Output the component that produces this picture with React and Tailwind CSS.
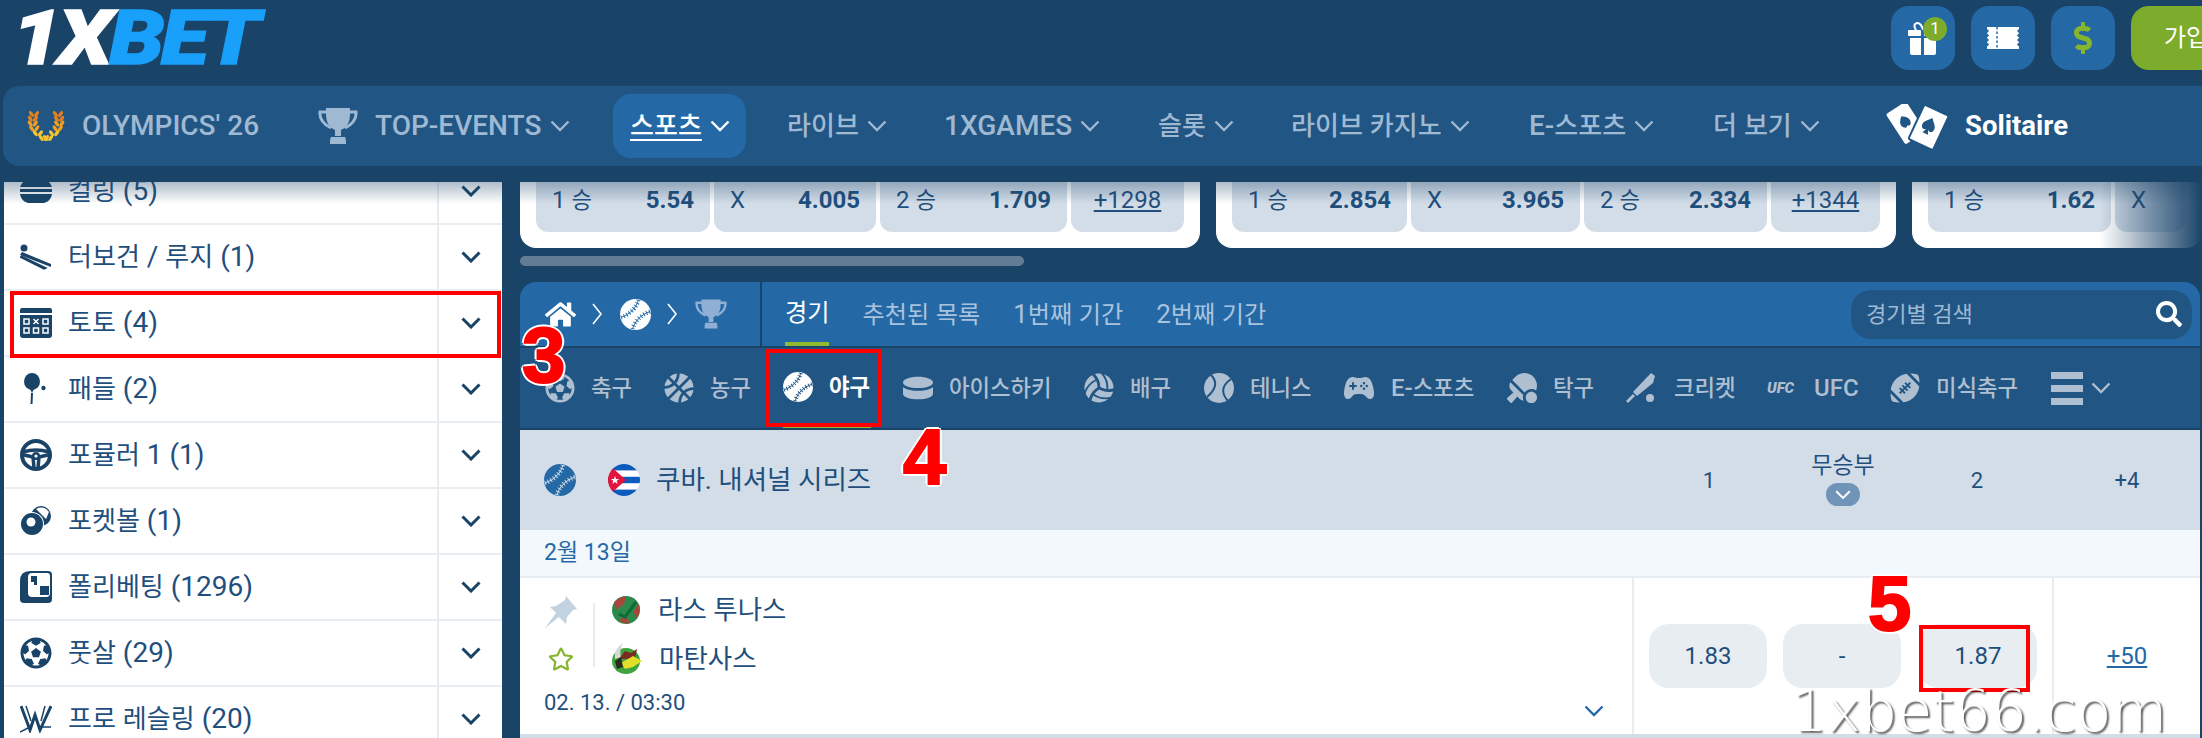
import React from "react";
import { FaFutbol, FaBasketballBall, FaVolleyballBall, FaTableTennis, FaFootballBall, FaHome, FaDollarSign, FaSearch, FaRegStar, FaHockeyPuck } from "react-icons/fa";
import { IoGameController } from "react-icons/io5";

const T = ({ children }) =>
  String(children)
    .split(/([가-힣]+)/)
    .map((p, i) => (/[가-힣]/.test(p) ? <span key={i} className="text-[0.93em]">{p}</span> : p));

const Chev = ({ className = "", w = 20, sw = 2.4 }) => (
  <svg width={w} height={w * 0.6} viewBox="0 0 20 12" fill="none" stroke="currentColor" strokeWidth={sw} className={className}>
    <path d="M1.5 1.5 L10 10 L18.5 1.5" />
  </svg>
);

const S1 = "M19 1 C17 9 10 16 1 19";
const S2 = "M31 13 C22 16 15 23 13 31";
const Ball = ({ bg, seam, s = 30 }) => (
  <svg width={s} height={s} viewBox="0 0 32 32" className="shrink-0">
    <circle cx="16" cy="16" r="16" fill={bg} />
    <path d={S1} fill="none" stroke={seam} strokeWidth="1" />
    <path d={S1} fill="none" stroke={seam} strokeWidth="4.5" strokeDasharray="1 2.2" />
    <path d={S2} fill="none" stroke={seam} strokeWidth="1" />
    <path d={S2} fill="none" stroke={seam} strokeWidth="4.5" strokeDasharray="1 2.2" />
  </svg>
);

const Laurel = () => {
  const leaves = [];
  for (let i = 0; i < 6; i++) {
    const t = i / 5;
    const y = 3 + t * 24;
    const x = 7 + 10 * t * t * t - 2 * Math.sin(t * 3.1);
    const col = i < 2 ? "#e5801f" : i < 4 ? "#ef9f22" : "#f6c42e";
    [[x - 2.6, -35], [x + 2.6, 35]].forEach(([lx, r], k) => {
      leaves.push(<ellipse key={`a${i}${k}`} cx={lx} cy={y} rx="1.7" ry="3.4" fill={col} transform={`rotate(${r} ${lx} ${y})`} />);
      leaves.push(<ellipse key={`b${i}${k}`} cx={38 - lx} cy={y} rx="1.7" ry="3.4" fill={col} transform={`rotate(${-r} ${38 - lx} ${y})`} />);
    });
  }
  return <svg width="38" height="30" viewBox="0 0 38 30" className="shrink-0">{leaves}</svg>;
};

const Trophy = ({ color, w = 40, h = 36 }) => (
  <svg width={w} height={h} viewBox="0 0 40 36" className="shrink-0">
    <path d="M9 4 H2 Q1 14 13 20" fill="none" stroke={color} strokeWidth="3" />
    <path d="M31 4 H38 Q39 14 27 20" fill="none" stroke={color} strokeWidth="3" />
    <path d="M8 0 H32 V7 Q32 18 23 22 V28 H17 V22 Q8 18 8 7 Z" fill={color} />
    <path d="M13 29 H27 Q28 30 28 36 H12 Q12 30 13 29 Z" fill={color} />
  </svg>
);

const Gift = () => (
  <svg width="30" height="34" viewBox="0 0 30 34" fill="#fff">
    <path d="M8 8 C4 2 9 -1 13 3 L15 7 L24 7" fill="none" stroke="#fff" strokeWidth="2" />
    <rect x="0" y="8" width="13" height="6" rx="1" />
    <rect x="16" y="8" width="14" height="6" rx="1" />
    <path d="M2 16 H13 V33 H4 Q2 33 2 31 Z" />
    <path d="M16 16 H28 V31 Q28 33 26 33 H16 Z" />
  </svg>
);

const Ticket = () => (
  <svg width="32" height="22" viewBox="0 0 32 22">
    <rect width="32" height="22" fill="#fff" />
    {[3, 7.5, 12, 16.5].map((y) => (
      <g key={y} fill="#2469a6">
        <circle cx="0" cy={y + 1} r="1.7" />
        <circle cx="32" cy={y + 1} r="1.7" />
      </g>
    ))}
    <path d="M10 0 V22" stroke="#2469a6" strokeWidth="1.5" strokeDasharray="2.5 2" />
  </svg>
);

const Solitaire = () => (
  <svg width="63" height="45" viewBox="0 0 63 45" className="shrink-0">
    <g transform="rotate(-33 18 20)">
      <rect x="8" y="2" width="24" height="36" rx="2" fill="#fff" />
      <path d="M20 12 C24 15 27 19 24 23 C22 25 21 24 20 23 C19 24 18 25 16 23 C13 19 16 15 20 12 Z" fill="#215583" />
    </g>
    <g transform="rotate(25 44 24)">
      <rect x="29" y="5" width="27" height="38" rx="2" fill="#fff" stroke="#215583" strokeWidth="2" />
      <path d="M42 14 C46 19 50 21 48 26 C47 28 44 28 43 26 L45 31 H39 L41 26 C40 28 37 28 36 26 C34 21 38 19 42 14 Z" fill="#215583" />
    </g>
  </svg>
);

const D = "#1a4368";
const Curling = () => (
  <svg width="32" height="40" viewBox="0 0 32 40" fill={D}>
    <rect x="9" y="0" width="14" height="8" rx="2" />
    <path d="M6 9 H26 Q31 12 32 16 H0 Q1 12 6 9 Z" />
    <rect x="0" y="18" width="32" height="3" />
    <path d="M0 23 H32 Q31 30 24 32 H8 Q1 30 0 23 Z" />
  </svg>
);
const Luge = () => (
  <svg width="32" height="26" viewBox="0 0 32 26" fill={D}>
    <circle cx="4" cy="4" r="3.5" />
    <path d="M0 11 L2 8 L31 20 V23 Z" />
    <path d="M0 13 L24 25 L26 24 L1 12" stroke={D} strokeWidth="1.5" />
  </svg>
);
const Toto = () => (
  <svg width="32" height="30" viewBox="0 0 32 30">
    <path d="M2 0 H30 Q32 0 32 2 V5 H0 V2 Q0 0 2 0 Z" fill={D} />
    <path d="M0 7 H32 V27 Q32 30 29 30 H3 Q0 30 0 27 Z" fill={D} />
    <g fill="none" stroke="#fff" strokeWidth="1.5">
      <rect x="4" y="11" width="5" height="5" />
      <path d="M13.5 11 L18.5 16 M18.5 11 L13.5 16" />
      <rect x="23" y="11" width="5" height="5" />
      <rect x="4" y="20" width="5" height="5" />
      <rect x="13.5" y="20" width="5" height="5" />
      <rect x="23" y="20" width="5" height="5" />
    </g>
  </svg>
);
const Paddle = () => (
  <svg width="24" height="32" viewBox="0 0 24 32" fill={D}>
    <ellipse cx="8" cy="8.5" rx="8" ry="8.5" />
    <path d="M6 16 L8 20 L10 16 M7 20 H9 L8.5 31 H6.5 Z" />
    <circle cx="19.5" cy="15" r="2.2" />
  </svg>
);
const Wheel = () => (
  <svg width="32" height="32" viewBox="0 0 32 32" fill="none" stroke={D}>
    <circle cx="16" cy="16" r="14" strokeWidth="4" />
    <path d="M3 13 Q16 9 29 13 M4 16 L13 18 L14 29 M28 16 L19 18 L18 29" strokeWidth="3.5" />
    <circle cx="16" cy="17" r="4" fill={D} stroke="none" />
    <circle cx="16" cy="17" r="1.6" fill="#fff" stroke="none" />
  </svg>
);
const Pool = () => (
  <svg width="32" height="32" viewBox="0 0 32 32">
    <circle cx="21" cy="11" r="10" fill={D} />
    <path d="M16 4 Q24 0 29 7 L26 14 Q20 8 16 4 Z" fill="#fff" />
    <circle cx="12" cy="19" r="12" fill="#fff" />
    <circle cx="12" cy="19" r="11" fill={D} />
    <circle cx="11" cy="17" r="4.5" fill="#fff" />
  </svg>
);
const Poly = () => (
  <svg width="32" height="32" viewBox="0 0 32 32">
    <path d="M10 0 H28 Q32 0 32 4 V28 Q32 32 28 32 H4 Q0 32 0 28 V10 Q0 0 10 0 Z" fill={D} />
    <path d="M12 2 H27 Q30 2 30 5 V22 Q30 26 26 26 H12 Q8 26 8 22 V6 Q8 2 12 2 Z" fill="#fff" />
    <path d="M11 5 H17 V14 H14 V11 H11 Z M20 15 H29 V24 H20 Z" fill={D} />
  </svg>
);
const Wwe = () => (
  <svg width="32" height="28" viewBox="0 0 32 28" fill="none" stroke={D}>
    <path d="M1 1 L10 25 L15 10 L20 25 L31 1" strokeWidth="3" />
    <path d="M6 1 L11 16 M25 1 L21 16" strokeWidth="1.5" />
    <path d="M0 27 L10 22 M20 22 H31" strokeWidth="1.5" />
  </svg>
);
const Tennis = () => (
  <svg width="30" height="30" viewBox="0 0 30 30">
    <circle cx="15" cy="15" r="15" fill="#aebfd1" />
    <path d="M7 2 Q17 12 3 24 M27 6 Q13 16 24 28" fill="none" stroke="#215583" strokeWidth="2" />
  </svg>
);
const Cricket = () => (
  <svg width="32" height="30" viewBox="0 0 32 30" fill="#aebfd1">
    <path d="M25 0 L29 3 L27 10 L11 23 L7 19 Z" />
    <path d="M7 21 L9 23 L2 30 L0 28 Z" />
    <circle cx="24" cy="25" r="4" />
  </svg>
);
const Pin = () => (
  <svg width="34" height="32" viewBox="0 0 34 32" fill="#c3d2e0">
    <path d="M22 0 L33 13 L29 14 L23 21 L22 28 L15 21 L1 32 L12 17 L6 11 L12 10 L21 4 Z" />
  </svg>
);
const Cuba = () => (
  <svg width="32" height="32" viewBox="0 0 32 32" className="shrink-0">
    <defs><clipPath id="cu"><circle cx="16" cy="16" r="16" /></clipPath></defs>
    <g clipPath="url(#cu)">
      <rect width="32" height="32" fill="#fff" />
      <rect y="0" width="32" height="6.4" fill="#0a5bbd" />
      <rect y="12.8" width="32" height="6.4" fill="#0a5bbd" />
      <rect y="25.6" width="32" height="6.4" fill="#0a5bbd" />
      <path d="M0 0 L18 16 L0 32 Z" fill="#e3143c" />
      <path d="M7 12 L8 15 H11 L8.7 17 L9.6 20 L7 18 L4.4 20 L5.3 17 L3 15 H6 Z" fill="#fff" />
    </g>
  </svg>
);
const Team1 = () => (
  <svg width="30" height="28" viewBox="0 0 30 28" className="shrink-0 blur-[0.5px]">
    <ellipse cx="15" cy="14" rx="14" ry="14" fill="#2c8a4c" />
    <path d="M3 6 Q9 1 15 0 L13 8 L5 14 Z M22 16 L28 8 Q30 16 26 22 Z M8 24 L14 20 L19 27 Q13 29 8 24 Z" fill="#a8463c" />
    <path d="M8 18 L14 21 L25 6" fill="none" stroke="#0f6b36" strokeWidth="3" />
  </svg>
);
const Team2 = () => (
  <svg width="32" height="31" viewBox="0 0 32 31" className="shrink-0 blur-[0.5px]">
    <ellipse cx="15" cy="18" rx="14" ry="13" fill="#3fa33f" />
    <path d="M4 16 Q2 6 12 0 Q8 8 10 14 Z" fill="#d8d8d8" />
    <path d="M8 16 L14 8 L20 10 L26 6 L24 16 Z" fill="#7a2c22" />
    <path d="M10 20 L22 13 L31 18 L22 24 L14 26 Z" fill="#e2df2a" />
    <path d="M4 18 L10 14 L12 24 L6 26 Z" fill="#2a2a1e" />
  </svg>
);

const navItems = [
  { t: "라이브", w: "ml-[41px] w-[157px]" },
  { t: "1XGAMES", w: "w-[214px]" },
  { t: "슬롯", w: "w-[133px]" },
  { t: "라이브 카지노", w: "w-[238px]" },
  { t: "E-스포츠", w: "w-[184px]" },
  { t: "더 보기", w: "w-[173px]" },
];

const sports = [
  { i: <FaFutbol size={30} />, t: "축구", w: "w-[119px]" },
  { i: <FaBasketballBall size={30} />, t: "농구", w: "w-[119px]" },
  { i: <Ball bg="#fff" seam="#215583" />, t: "야구", w: "w-[120px]", a: true },
  { i: <FaHockeyPuck size={30} />, t: "아이스하키", w: "w-[181px]" },
  { i: <FaVolleyballBall size={30} />, t: "배구", w: "w-[120px]" },
  { i: <Tennis />, t: "테니스", w: "w-[139px]" },
  { i: <IoGameController size={32} />, t: "E-스포츠", w: "w-[164px]" },
  { i: <FaTableTennis size={30} />, t: "탁구", w: "w-[119px]" },
  { i: <Cricket />, t: "크리켓", w: "w-[141px]" },
  { i: <span className="block w-[31px] text-[15px] font-black italic leading-none">UFC</span>, t: "UFC", w: "w-[123px]" },
  { i: <FaFootballBall size={30} />, t: "미식축구", w: "w-[161px]" },
];

const side = [
  { i: <Curling />, t: "컬링 (5)" },
  { i: <Luge />, t: "터보건 / 루지 (1)" },
  { i: <Toto />, t: "토토 (4)" },
  { i: <Paddle />, t: "패들 (2)" },
  { i: <Wheel />, t: "포뮬러 1 (1)" },
  { i: <Pool />, t: "포켓볼 (1)" },
  { i: <Poly />, t: "폴리베팅 (1296)" },
  { i: <FaFutbol size={32} color={D} />, t: "풋살 (29)" },
  { i: <Wwe />, t: "프로 레슬링 (20)" },
];

const Cell = ({ a, b, w }) => (
  <div className={`${w} h-[64px] shrink-0 rounded-b-[12px] bg-[#d3dde8] flex items-center justify-between px-4 text-[24px] text-[#1f4f7d]`}>
    <span><T>{a}</T></span>
    <span className="font-bold">{b}</span>
  </div>
);
const More = ({ t, w }) => (
  <div className={`${w} h-[64px] shrink-0 rounded-b-[12px] bg-[#d3dde8] flex items-center justify-center text-[24px] text-[#1f4f7d] underline underline-offset-2`}>{t}</div>
);
const Card = ({ children, w = "w-[680px]" }) => (
  <div className={`${w} h-[80px] shrink-0 rounded-b-[16px] bg-white flex gap-1 px-4`}>{children}</div>
);
const Odd = ({ t, w = "w-[118px]" }) => (
  <div className={`${w} h-[64px] rounded-[20px] bg-[#e8edf2] flex items-center justify-center text-[24px] text-[#1f4f7d]`}>{t}</div>
);

const Digit = ({ t, className }) => (
  <span className={`absolute font-['Liberation_Sans',sans-serif] font-bold text-[78px] leading-none text-[#ff0000] [-webkit-text-stroke:2px_#ff0000] [text-shadow:3px_0_0_#fff,-3px_0_0_#fff,0_3px_0_#fff,0_-3px_0_#fff,2px_2px_0_#fff,-2px_2px_0_#fff,2px_-2px_0_#fff,-2px_-2px_0_#fff] ${className}`}>{t}</span>
);

export default function App() {
  return (
    <div className="relative w-[2202px] h-[738px] overflow-hidden bg-[#1a4368] font-['Roboto','Noto_Sans_CJK_KR',sans-serif]">
      {/* header */}
      <div className="h-[86px] flex items-start pt-[6px] pl-[12px]">
        <div className="h-[64px] flex items-center italic font-black text-[76px] leading-none tracking-[-3px] origin-left scale-x-[1.16] [-webkit-text-stroke:1.5px_currentColor] font-['Roboto',sans-serif]">
          <span className="text-white">1X</span>
          <span className="text-[#18a0fb]">BET</span>
        </div>
        <div className="ml-auto flex gap-4">
          <div className="relative w-[64px] h-[64px] rounded-[18px] bg-[#2469a6] flex items-center justify-center pt-[2px]">
            <Gift />
            <span className="absolute left-[32px] top-[11px] w-[24px] h-[24px] rounded-full bg-[#7dab2c] text-white text-[17px] flex items-center justify-center">1</span>
          </div>
          <div className="w-[64px] h-[64px] rounded-[18px] bg-[#2469a6] flex items-center justify-center"><Ticket /></div>
          <div className="w-[64px] h-[64px] rounded-[18px] bg-[#2469a6] flex items-center justify-center text-[#85b52e]"><FaDollarSign size={32} /></div>
          <div className="w-[71px] h-[64px] rounded-l-[18px] bg-[#7dab2c] pl-[33px] flex items-center text-white text-[24px] whitespace-nowrap">가입</div>
        </div>
      </div>

      {/* nav */}
      <div className="ml-[3px] h-[80px] rounded-l-[16px] bg-[#215583] flex items-center pl-[24px] text-[28px] font-medium text-[#a0b9d3] whitespace-nowrap">
        <div className="w-[291px] flex items-center gap-[17px]"><Laurel /><span>OLYMPICS' 26</span></div>
        <div className="w-[295px] flex items-center gap-[17px]">
          <Trophy color="#a0b9d3" />
          <span>TOP-EVENTS</span><Chev className="ml-[-8px]" />
        </div>
        <div className="w-[133px] h-[64px] rounded-[18px] bg-[#2469a6] flex items-center pl-[17px] text-white gap-2">
          <span className="underline underline-offset-4"><T>스포츠</T></span><Chev />
        </div>
        {navItems.map((n) => (
          <div key={n.t} className={`${n.w} flex items-center gap-2`}><span><T>{n.t}</T></span><Chev /></div>
        ))}
        <div className="flex items-center gap-4 text-white font-bold text-[27.5px]"><Solitaire /><span>Solitaire</span></div>
      </div>

      {/* main */}
      <div className="relative mt-[16px] h-[556px] overflow-hidden flex">
        <aside className="ml-[4px] w-[498px] shrink-0 bg-white text-[28px] text-[#1f4f7d]">
          <div className="mt-[-23px]">
            {side.map((s) => (
              <div key={s.t} className="h-[66px] flex border-b-2 border-[#e8edf2]">
                <div className="flex-1 flex items-center pl-4">
                  <span className="w-[32px] mr-4 flex justify-center shrink-0">{s.i}</span>
                  <span><T>{s.t}</T></span>
                </div>
                <div className="w-[65px] border-l-2 border-[#e8edf2] flex items-center justify-center text-[#1a4368]"><Chev sw={3} /></div>
              </div>
            ))}
          </div>
        </aside>

        <div className="ml-[18px] w-[1682px] shrink-0">
          <div className="relative h-[66px] overflow-hidden">
            <div className="flex gap-4 mt-[-14px]">
              <Card>
                <Cell a="1 승" b="5.54" w="w-[174px]" />
                <Cell a="X" b="4.005" w="w-[162px]" />
                <Cell a="2 승" b="1.709" w="w-[187px]" />
                <More t="+1298" w="w-[113px]" />
              </Card>
              <Card>
                <Cell a="1 승" b="2.854" w="w-[175px]" />
                <Cell a="X" b="3.965" w="w-[169px]" />
                <Cell a="2 승" b="2.334" w="w-[183px]" />
                <More t="+1344" w="w-[109px]" />
              </Card>
              <Card w="w-[290px]">
                <Cell a="1 승" b="1.62" w="w-[183px]" />
                <Cell a="X" b="" w="w-[70px]" />
              </Card>
            </div>
            <div className="absolute right-0 top-0 bottom-0 w-[102px] bg-gradient-to-r from-transparent to-[#1a4368]" />
          </div>
          <div className="mt-[8px] w-[504px] h-[10px] rounded-[5px] bg-[#637c96]" />

          <div className="mt-[16px] w-[1680px]">
            <div className="h-[64px] rounded-t-[16px] bg-[#2469a6] flex items-stretch">
              <div className="w-[242px] border-r-2 border-[#1a4368] flex items-center pl-[25px] text-white">
                <FaHome size={31} className="shrink-0" />
                <svg width="12" height="24" viewBox="0 0 12 24" fill="none" stroke="#fff" strokeWidth="1.6" className="ml-[15px] mr-[17px] shrink-0"><path d="M2 2 L10 12 L2 22" /></svg>
                <Ball bg="#fff" seam="#2469a6" s={31} />
                <svg width="12" height="24" viewBox="0 0 12 24" fill="none" stroke="#fff" strokeWidth="1.6" className="ml-[15px] mr-[17px] shrink-0"><path d="M2 2 L10 12 L2 22" /></svg>
                <Trophy color="#8fb0d4" w={32} h={30} />
              </div>
              <div className="flex-1 flex items-stretch pl-[23px] text-[26px] text-[#a9c3de] gap-[33px]">
                <div className="flex items-center text-white border-b-4 border-[#8fbb2f]"><span><T>경기</T></span></div>
                <div className="flex items-center"><span><T>추천된 목록</T></span></div>
                <div className="flex items-center"><span><T>1번째 기간</T></span></div>
                <div className="flex items-center"><span><T>2번째 기간</T></span></div>
              </div>
              <div className="w-[349px] flex items-center pr-2">
                <div className="w-[341px] h-[49px] rounded-[20px] bg-[#215583] flex items-center justify-between pl-[15px] pr-[10px] text-[22px] text-[#9fb9d3]">
                  <span>경기별 검색</span>
                  <FaSearch size={26} color="#fff" />
                </div>
              </div>
            </div>
            <div className="h-[2px] bg-[#1a4368]" />
            <div className="h-[80px] bg-[#215583] flex items-stretch pl-[25px] text-[24px] font-medium text-[#aebfd1] whitespace-nowrap">
              {sports.map((s) => (
                <div key={s.t} className={`${s.w} flex`}>
                  <div className={s.a ? "flex items-center gap-[16px] border-b-2 border-[#8fbb2f] pr-[1px]" : "flex items-center gap-[16px]"}>
                    {s.i}
                    <span className={s.a ? "text-white font-bold" : ""}><T>{s.t}</T></span>
                  </div>
                </div>
              ))}
              <div className="flex items-center gap-2">
                <div className="w-[32px] flex flex-col gap-[6px]">
                  <div className="h-[7px] bg-[#aebfd1]" /><div className="h-[7px] bg-[#aebfd1]" /><div className="h-[7px] bg-[#aebfd1]" />
                </div>
                <Chev />
              </div>
            </div>
            <div className="h-[2px] bg-[#1a4368]" />

            <div className="h-[100px] bg-[#d3dde8] flex items-center text-[#1f4f7d] text-[22px]">
              <div className="flex-1 flex items-center pl-[24px] text-[26.5px]">
                <Ball bg="#2469a6" seam="#d3dde8" s={32} />
                <span className="ml-[32px]"><Cuba /></span>
                <span className="ml-[16px]">쿠바. 내셔널 시리즈</span>
              </div>
              <div className="w-[134px] text-center">1</div>
              <div className="w-[134px] flex flex-col items-center text-[23px] leading-[28px] mt-[-2px]">
                <span>무승부</span>
                <span className="mt-[3px] w-[34px] h-[23px] rounded-[12px] bg-[#7094b8] flex items-center justify-center text-white"><Chev w={16} /></span>
              </div>
              <div className="w-[134px] text-center">2</div>
              <div className="w-[156px] pl-[10px] text-center">+4</div>
            </div>
            <div className="h-[46px] bg-[#f3f8fc] flex items-center pl-[24px] text-[23px] text-[#2469a6]">2월 13일</div>
            <div className="h-[2px] bg-[#e8edf2]" />

            <div className="h-[156px] bg-white flex text-[#1f4f7d]">
              <div className="flex-1 border-r-2 border-[#e8edf2] pl-[24px] pt-[7px] flex">
                <div className="flex-1">
                  <div className="flex">
                    <div className="w-[34px] h-[98px] flex flex-col items-center">
                      <div className="h-[49px] flex items-center pt-[4px]"><Pin /></div>
                      <div className="h-[49px] flex items-center"><FaRegStar size={26} color="#85b52e" /></div>
                    </div>
                    <div className="ml-[15px] mt-[18px] h-[64px] w-[2px] bg-[#e8edf2]" />
                    <div className="ml-[16px] text-[26.5px]">
                      <div className="h-[49px] flex items-center gap-[17px]"><Team1 /><span>라스 투나스</span></div>
                      <div className="h-[49px] flex items-center gap-[16px]"><Team2 /><span>마탄사스</span></div>
                    </div>
                  </div>
                  <div className="h-[38px] flex items-center text-[22px]">02. 13. / 03:30</div>
                </div>
                <div className="self-end mb-[17px] mr-[28px] text-[#2469a6]"><Chev /></div>
              </div>
              <div className="w-[420px] border-r-2 border-[#e8edf2] pl-[15px] flex items-center gap-4">
                <Odd t="1.83" />
                <Odd t="-" />
                <Odd t="1.87" w="w-[118px] ml-[2px]" />
              </div>
              <div className="w-[146px] flex items-center justify-center text-[24px] text-[#2469a6] underline underline-offset-2">+50</div>
            </div>
            <div className="h-[4px] bg-[#d3dde8]" />
          </div>
        </div>
        <div className="absolute left-0 right-0 top-0 h-[22px] bg-gradient-to-b from-[#1a436859] to-transparent pointer-events-none" />
      </div>

      {/* annotations */}
      <div className="absolute left-[10px] top-[291px] w-[491px] h-[67px] border-4 border-[#ff0000]" />
      <div className="absolute left-[765px] top-[349px] w-[116px] h-[78px] border-4 border-[#ff0000]" />
      <div className="absolute left-[1919px] top-[625px] w-[111px] h-[67px] border-4 border-[#ff0000]" />
      <Digit t="3" className="left-[522px] top-[316px]" />
      <Digit t="4" className="left-[903px] top-[418px]" />
      <Digit t="5" className="left-[1868px] top-[564px]" />
      <span className="absolute left-[1791px] top-[683px] font-['DejaVu_Sans',sans-serif] font-extralight text-[57px] leading-none text-white [text-shadow:2px_2px_2px_rgba(0,0,0,0.65)]">1xbet66.com</span>
    </div>
  );
}
